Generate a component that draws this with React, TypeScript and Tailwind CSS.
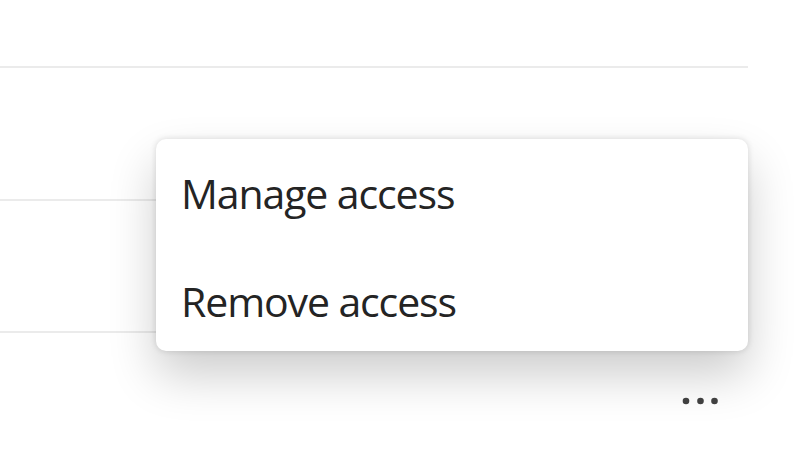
export default function App() {
  const rows = ['h-[133px]', 'h-[132px]'];

  return (
    <div className="relative h-[460px] w-[807px] overflow-hidden bg-white font-['Open_Sans',sans-serif] text-[#242424]">
      {/* Background list rows */}
      <div className="w-[748px]">
        <div className="h-[68px] border-b-2 border-[#ebebeb]" />
        {rows.map((h, i) => (
          <div key={i} className={`${h} border-b-2 border-[#ebebeb]`} />
        ))}
        <div className="flex h-[132px] items-center justify-end pr-[24px]">
          <button className="flex h-[40px] w-[48px] items-center justify-center pt-[4px]">
            <svg width="36" height="8" viewBox="0 0 36 8" fill="#424242">
              <circle cx="4" cy="4" r="3.3" />
              <circle cx="18.5" cy="4" r="3.3" />
              <circle cx="32.5" cy="4" r="3.3" />
            </svg>
          </button>
        </div>
      </div>

      {/* Context menu popover */}
      <div className="absolute left-[156px] top-[139px] flex h-[212px] w-[592px] flex-col gap-[12px] rounded-[10px] bg-white pt-[7px] pb-[2px] shadow-[0_0_6px_rgba(0,0,0,0.14),0_24px_48px_rgba(0,0,0,0.2)]">
        <div className="flex h-[96px] items-center pl-[25px] text-[41px] font-[370] leading-none tracking-[-1.1px]">Manage access</div>
        <div className="flex h-[96px] items-center pl-[25px] text-[41px] font-[370] leading-none tracking-[-1.1px]">Remove access</div>
      </div>
    </div>
  );
}
